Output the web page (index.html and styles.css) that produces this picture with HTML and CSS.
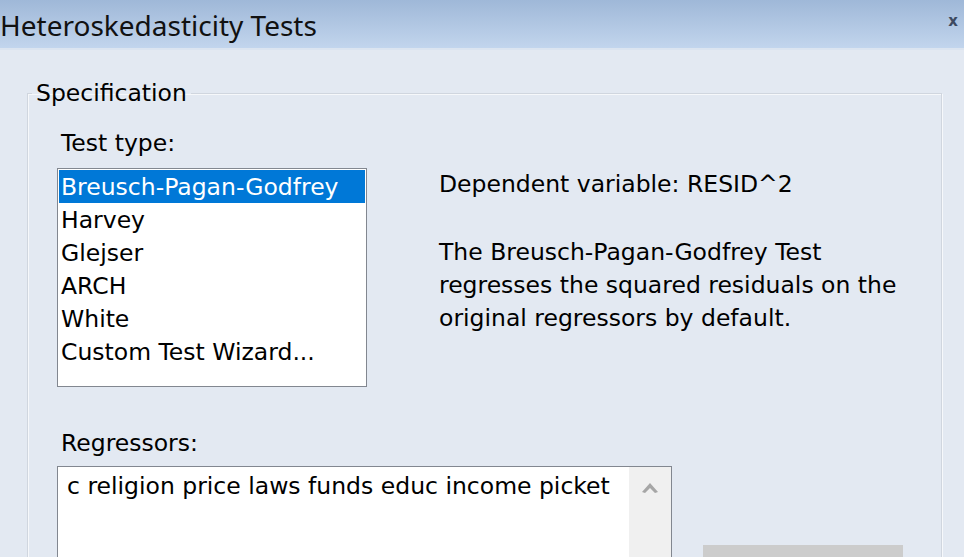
FILE: index.html
```html
<!DOCTYPE html>
<html>
<head>
<meta charset="utf-8">
<link rel="stylesheet" href="styles.css">
</head>
<body>
<div class="window">
  <div class="titlebar">
    <span class="title">Heteroskedasticity Tests</span>
    <span class="close">x</span>
  </div>
  <div class="body">
    <fieldset class="group">
      <legend class="legend">Specification</legend>
      <div class="inner">
        <div class="row">
          <div class="left">
            <div class="label">Test type:</div>
            <div class="listbox">
              <div class="item selected">Breusch-Pagan-Godfrey</div>
              <div class="item">Harvey</div>
              <div class="item">Glejser</div>
              <div class="item">ARCH</div>
              <div class="item">White</div>
              <div class="item">Custom Test Wizard...</div>
            </div>
          </div>
          <div class="right">
            <p class="dep">Dependent variable: RESID^2</p>
            <p class="desc">The Breusch-Pagan-Godfrey Test<br>regresses the squared residuals on the<br>original regressors by default.</p>
          </div>
        </div>
        <div class="label reg-label">Regressors:</div>
        <div class="row2">
          <div class="textarea">
            <div class="ta-text">c religion price laws funds educ income picket</div>
            <div class="scrollbar">
              <svg width="18" height="14" viewBox="0 0 18 14"><path d="M1 12 L9 3 L17 12 L14 13 L9 8 L4 13 Z" fill="#a6a6a6"/></svg>
            </div>
          </div>
          <div class="btn"></div>
        </div>
      </div>
    </fieldset>
  </div>
</div>
</body>
</html>
```

FILE: styles.css
```css
html, body {
  margin: 0;
  padding: 0;
}
body {
  width: 964px;
  height: 557px;
  overflow: hidden;
  background: #e3e9f2;
  font-family: "DejaVu Sans", sans-serif;
  font-size: 23.5px;
  color: #000;
}
.window {
  display: flex;
  flex-direction: column;
  height: 557px;
}
.titlebar {
  height: 50px;
  flex: none;
  display: flex;
  align-items: flex-start;
  justify-content: space-between;
  background: linear-gradient(#9fb8d8, #c2d5ed);
  border-bottom: 2px solid #dbe4f0;
  box-sizing: border-box;
}
.title {
  font-family: "Noto Sans", "Open Sans", sans-serif;
  font-size: 28px;
  line-height: 36px;
  margin-top: 7px;
  color: #111;
}
.close {
  font-family: "DejaVu Sans", sans-serif;
  font-size: 15px;
  line-height: 16px;
  font-weight: bold;
  color: #3d4a60;
  margin-right: 6px;
  margin-top: 13px;
}
.body {
  padding: 28px 22px 0 27px;
}
.group {
  margin: 0;
  padding: 0;
  border: 1px solid #d0d6df;
  box-shadow: inset 1px 1px 0 #f6f8fb, 1px 1px 0 #f6f8fb;
  min-height: 600px;
}
.inner {
  padding: 18px 0 0 29px;
}
.legend {
  padding: 0 4px;
  margin-left: 4px;
  line-height: 30px;
}
.row {
  display: flex;
}
.left {
  width: 382px;
  flex: none;
}
.label {
  line-height: 30px;
  padding-left: 4px;
  margin-top: 2px;
}
.listbox {
  margin-top: 10px;
  width: 310px;
  height: 219px;
  box-sizing: border-box;
  border: 1px solid #828790;
  background: #fff;
  padding: 1px;
}
.item {
  line-height: 31px;
  padding: 2px 0 0 2px;
  white-space: nowrap;
}
.item.selected {
  background: #0078d7;
  color: #fff;
}
.right {
  padding-top: 42px;
  line-height: 33px;
}
.right p {
  margin: 0;
}
.dep {
  margin-bottom: 35px !important;
}
.reg-label {
  margin-top: 41px;
}
.row2 {
  display: flex;
  margin-top: 8px;
}
.textarea {
  width: 615px;
  height: 120px;
  box-sizing: border-box;
  border: 1px solid #828790;
  background: #fff;
  display: flex;
  flex: none;
}
.ta-text {
  flex: 1;
  line-height: 33px;
  padding: 3px 0 0 9px;
}
.scrollbar {
  width: 42px;
  background: #f0f0f0;
  display: flex;
  justify-content: center;
  padding-top: 13px;
  box-sizing: border-box;
}
.btn {
  margin-left: 31px;
  margin-top: 79px;
  width: 200px;
  height: 40px;
  background: #cccccc;
}
```
